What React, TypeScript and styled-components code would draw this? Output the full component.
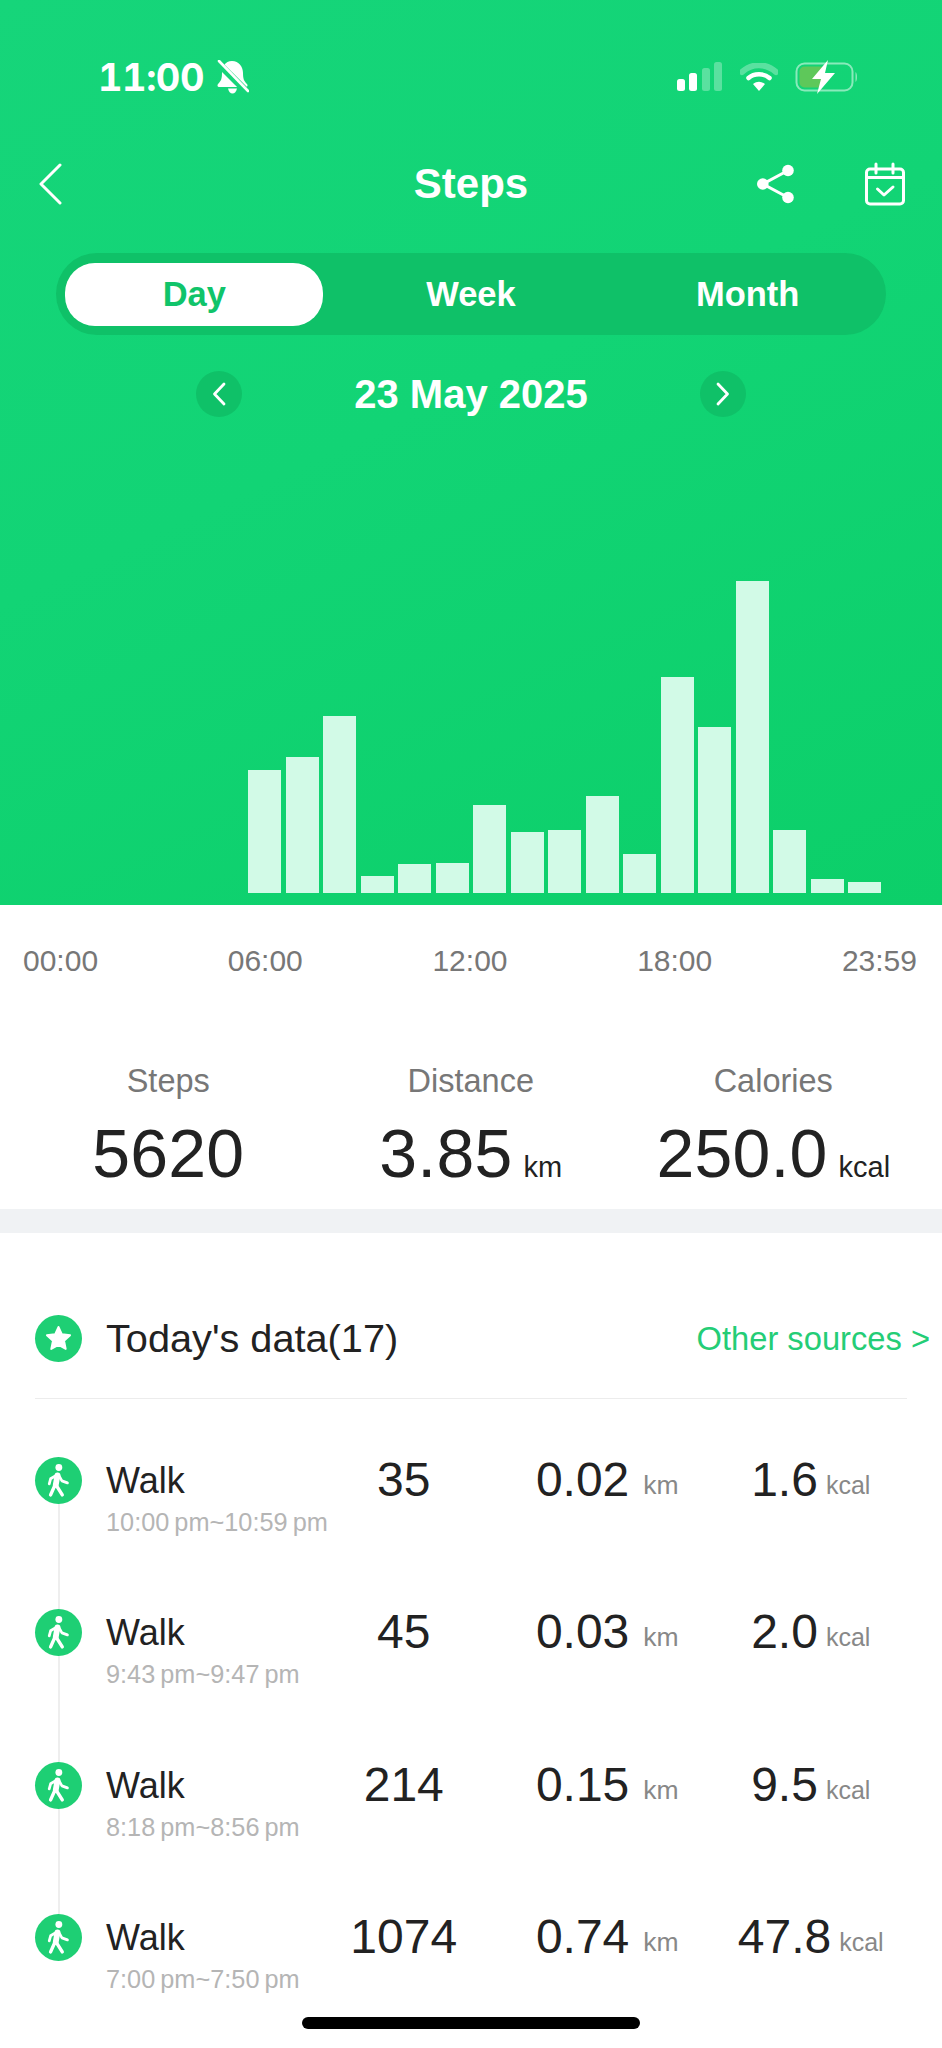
import React from "react";
import styled, { createGlobalStyle } from "styled-components";

const GlobalStyle = createGlobalStyle`
  html, body {
    margin: 0;
    padding: 0;
    background: #ffffff;
  }
  * {
    box-sizing: border-box;
  }
`;

const BAR_HEIGHTS = [123, 136, 177, 17, 29, 30, 88, 61, 63, 97, 39, 216, 166, 312, 63, 14, 11];
const AXIS_LABELS = ["00:00", "06:00", "12:00", "18:00", "23:59"];

const WALKS = [
  { time: "10:00\u2009pm~10:59\u2009pm", steps: "35", km: "0.02", kcal: "1.6" },
  { time: "9:43\u2009pm~9:47\u2009pm", steps: "45", km: "0.03", kcal: "2.0" },
  { time: "8:18\u2009pm~8:56\u2009pm", steps: "214", km: "0.15", kcal: "9.5" },
  { time: "7:00\u2009pm~7:50\u2009pm", steps: "1074", km: "0.74", kcal: "47.8" },
];

const WalkIcon = () => (
  <svg width="25" height="35" viewBox="55 38 72 102" fill="none">
    <circle cx="92" cy="51" r="10" fill="#fff" />
    <path d="M88 72 L68 84 L64 99" stroke="#fff" strokeWidth="8" strokeLinecap="round" strokeLinejoin="round" />
    <path d="M92 74 L101 90 L117 96" stroke="#fff" strokeWidth="8" strokeLinecap="round" strokeLinejoin="round" />
    <path d="M88 74 L83 102" stroke="#fff" strokeWidth="17" strokeLinecap="round" />
    <path d="M80 104 L68 131" stroke="#fff" strokeWidth="10" strokeLinecap="round" />
    <path d="M85 104 L102 131" stroke="#fff" strokeWidth="10" strokeLinecap="round" />
  </svg>
);

const App = () => {
  return (
    <Page>
      <GlobalStyle />
      <Hero>
        <StatusBar>
          <StatusLeft>
            <Clock>11:00</Clock>
            <svg width="33" height="34" viewBox="0 0 33 34" fill="none">
              <path
                d="M16 1 C23 1 27 7 27 13 C27 19 28 21 31 24 C32 25.500 31.500 27 30 27 H3 C1.500 27 1 25.500 2 24 C5 21 6 19 6 13 C6 7 9 1 16 1Z"
                fill="#fff"
              />
              <path d="M12 28.500 H21 C20.500 31.500 18.500 33.500 16.500 33.500 C14.500 33.500 12.500 31.500 12 28.500Z" fill="#fff" />
              <path d="M1 2 L32 33" stroke="#16d57a" strokeWidth="7" />
              <path d="M3 1 L32 31" stroke="#fff" strokeWidth="2.6" strokeLinecap="round" />
            </svg>
          </StatusLeft>
          <StatusRight>
            <svg width="46" height="30" viewBox="0 0 46 30">
              <rect x="0" y="17" width="8" height="12" rx="2.5" fill="#fff" />
              <rect x="12" y="11" width="8" height="18" rx="2.5" fill="#fff" />
              <rect x="25" y="6" width="8" height="23" rx="2.5" fill="#fff" opacity="0.3" />
              <rect x="37" y="0" width="8" height="29" rx="2.5" fill="#fff" opacity="0.3" />
            </svg>
            <svg width="38" height="28" viewBox="0 0 38 28" fill="none">
              <path d="M2 9 C12 0 26 0 36 9" stroke="#fff" strokeOpacity="0.3" strokeWidth="6" strokeLinecap="round" />
              <path d="M8.500 15 C14 10 24 10 29.500 15" stroke="#fff" strokeWidth="4.5" strokeLinecap="round" />
              <path d="M13 21 C17 18 21 18 25 21 L19 28Z" fill="#fff" />
            </svg>
            <svg width="64" height="34" viewBox="0 0 64 34" fill="none">
              <rect x="1.500" y="3.500" width="56" height="27" rx="8" stroke="#fff" strokeOpacity="0.5" strokeWidth="2" />
              <rect x="4.500" y="6.500" width="25" height="21" rx="5" fill="#5ec85a" />
              <path d="M60.500 12 C62.500 13 62.500 21 60.500 22Z" fill="#fff" fillOpacity="0.5" />
              <path d="M33 0 L17 19 H26 L22 34 L40 13 H30Z" fill="#fff" />
            </svg>
          </StatusRight>
        </StatusBar>

        <NavBar>
          <svg width="24" height="42" viewBox="0 0 24 42" fill="none">
            <path d="M22 2 L3 21 L22 40" stroke="#fff" strokeWidth="3" strokeLinecap="round" strokeLinejoin="round" />
          </svg>
          <NavTitle>Steps</NavTitle>
          <NavActions>
            <svg width="40" height="42" viewBox="0 0 40 42" fill="none">
              <path d="M32 7.500 L7 21 L32 34.500" stroke="#fff" strokeWidth="3" />
              <circle cx="32" cy="7.500" r="5.8" fill="#fff" />
              <circle cx="6.800" cy="21" r="5.8" fill="#fff" />
              <circle cx="32" cy="34.500" r="5.8" fill="#fff" />
            </svg>
            <svg width="42" height="44" viewBox="0 0 42 44" fill="none">
              <rect x="2.500" y="7" width="37" height="35" rx="3.5" stroke="#fff" strokeWidth="3" />
              <path d="M2.500 15.500 H39.500" stroke="#fff" strokeWidth="3" />
              <path d="M12 2 V11 M29 2 V11" stroke="#fff" strokeWidth="3" strokeLinecap="round" />
              <path d="M13.500 27 L20 33 L29 25" stroke="#fff" strokeWidth="3" strokeLinecap="round" strokeLinejoin="round" />
            </svg>
          </NavActions>
        </NavBar>

        <Tabs>
          <Tab $active>Day</Tab>
          <Tab>Week</Tab>
          <Tab>Month</Tab>
        </Tabs>

        <DateRow>
          <DateArrow>
            <svg width="14" height="24" viewBox="0 0 14 24" fill="none">
              <path d="M12 2 L2.500 12 L12 22" stroke="#fff" strokeWidth="2.8" strokeLinecap="round" strokeLinejoin="round" />
            </svg>
          </DateArrow>
          <DateText>23 May 2025</DateText>
          <DateArrow>
            <svg width="14" height="24" viewBox="0 0 14 24" fill="none">
              <path d="M2 2 L11.500 12 L2 22" stroke="#fff" strokeWidth="2.8" strokeLinecap="round" strokeLinejoin="round" />
            </svg>
          </DateArrow>
        </DateRow>

        <Chart>
          {BAR_HEIGHTS.map((h, i) => (
            <Bar key={i} $h={h} />
          ))}
        </Chart>
      </Hero>

      <Axis>
        {AXIS_LABELS.map((label) => (
          <AxisLabel key={label}>{label}</AxisLabel>
        ))}
      </Axis>

      <Stats>
        <Stat>
          <StatLabel>Steps</StatLabel>
          <StatValue>5620</StatValue>
        </Stat>
        <Stat>
          <StatLabel>Distance</StatLabel>
          <StatValue>
            3.85<StatUnit>km</StatUnit>
          </StatValue>
        </Stat>
        <Stat>
          <StatLabel>Calories</StatLabel>
          <StatValue>
            250.0<StatUnit>kcal</StatUnit>
          </StatValue>
        </Stat>
      </Stats>

      <Band />

      <Section>
        <SectionHead>
          <HeadLeft>
            <GreenDot>
              <svg width="27" height="26" viewBox="0 0 29 28">
                <path
                  d="M14.500 2 L18.200 10 L27 11 L20.500 17 L22.300 25.800 L14.500 21.400 L6.700 25.800 L8.500 17 L2 11 L10.800 10Z"
                  fill="#fff"
                  stroke="#fff"
                  strokeWidth="2"
                  strokeLinejoin="round"
                />
              </svg>
            </GreenDot>
            <HeadTitle>Today's data(17)</HeadTitle>
          </HeadLeft>
          <HeadLink>Other sources &gt;</HeadLink>
        </SectionHead>

        <List>
          {WALKS.map((walk, i) => (
            <Row key={walk.time}>
              <Marker>
                <GreenDot>
                  <WalkIcon />
                </GreenDot>
                {i < WALKS.length - 1 && <Connector />}
              </Marker>
              <RowInfo>
                <RowName>Walk</RowName>
                <RowTime>{walk.time}</RowTime>
              </RowInfo>
              <RowValue>{walk.steps}</RowValue>
              <RowValue>
                {walk.km}
                <RowUnit $gap={14} $size={26.5}>km</RowUnit>
              </RowValue>
              <RowValue>
                {walk.kcal}
                <RowUnit $gap={8} $size={25}>kcal</RowUnit>
              </RowValue>
            </Row>
          ))}
        </List>
      </Section>

      <HomeIndicator />
    </Page>
  );
};

export default App;

const Page = styled.div`
  position: relative;
  width: 942px;
  height: 2048px;
  overflow: hidden;
  background: #ffffff;
  font-family: "Liberation Sans", Arial, sans-serif;
`;

const Hero = styled.div`
  height: 905px;
  display: flex;
  flex-direction: column;
  padding-top: 60px;
  background: linear-gradient(155deg, #16d57a 0%, #12d475 45%, #0ccf69 100%);
`;

const StatusBar = styled.div`
  height: 34px;
  display: flex;
  justify-content: space-between;
  align-items: center;
  padding: 0 83px 0 98px;
`;

const StatusLeft = styled.div`
  display: flex;
  align-items: center;
  gap: 12px;
`;

const Clock = styled.span`
  font-family: Inter, "Liberation Sans", sans-serif;
  font-size: 38px;
  font-weight: 700;
  line-height: 34px;
  font-variant-numeric: tabular-nums;
  letter-spacing: -0.5px;
  color: #ffffff;
`;

const StatusRight = styled.div`
  display: flex;
  align-items: center;
  gap: 17px;
`;

const NavBar = styled.div`
  height: 44px;
  margin-top: 68px;
  display: flex;
  justify-content: space-between;
  align-items: center;
  position: relative;
  padding: 0 36px 0 38px;
`;

const NavTitle = styled.div`
  position: absolute;
  left: 0;
  right: 0;
  text-align: center;
  font-size: 42px;
  font-weight: 700;
  line-height: 44px;
  color: #ffffff;
`;

const NavActions = styled.div`
  display: flex;
  align-items: center;
  gap: 68px;
`;

const Tabs = styled.div`
  width: 830px;
  height: 82px;
  margin: 47px 0 0 56px;
  display: grid;
  grid-template-columns: repeat(3, 1fr);
  align-items: center;
  justify-items: center;
  border-radius: 41px;
  background: #0fc168;
`;

const Tab = styled.div<{ $active?: boolean }>`
  width: 258px;
  height: 63px;
  display: flex;
  align-items: center;
  justify-content: center;
  border-radius: 30px;
  font-size: 34.5px;
  font-weight: 700;
  background: ${(p) => (p.$active ? "#ffffff" : "transparent")};
  color: ${(p) => (p.$active ? "#10c46a" : "#ffffff")};
`;

const DateRow = styled.div`
  height: 46px;
  margin-top: 36px;
  display: flex;
  justify-content: center;
  align-items: center;
  gap: 112px;
`;

const DateArrow = styled.div`
  width: 46px;
  height: 46px;
  display: flex;
  align-items: center;
  justify-content: center;
  border-radius: 50%;
  background: #0fc168;
`;

const DateText = styled.div`
  width: 234px;
  white-space: nowrap;
  text-align: center;
  font-size: 40px;
  font-weight: 700;
  color: #ffffff;
`;

const Chart = styled.div`
  flex: 1;
  display: flex;
  align-items: flex-end;
  gap: 4.5px;
  padding: 0 0 12px 248px;
`;

const Bar = styled.div<{ $h: number }>`
  width: 33px;
  height: ${(p) => p.$h}px;
  background: #d2fae7;
`;

const Axis = styled.div`
  display: flex;
  justify-content: space-between;
  padding: 38px 25px 0 23px;
`;

const AxisLabel = styled.span`
  font-size: 30px;
  line-height: 36px;
  color: #777777;
`;

const Stats = styled.div`
  display: grid;
  grid-template-columns: repeat(3, 302.5px);
  padding: 82px 0 0 17px;
  height: 230px;
`;

const Stat = styled.div`
  display: flex;
  flex-direction: column;
  align-items: center;
`;

const StatLabel = styled.div`
  font-size: 32.5px;
  line-height: 40px;
  color: #777777;
`;

const StatValue = styled.div`
  margin-top: 17px;
  font-size: 68px;
  line-height: 70px;
  letter-spacing: 0.2px;
  white-space: nowrap;
  color: #222222;
`;

const StatUnit = styled.span`
  margin-left: 11px;
  font-size: 29px;
  letter-spacing: 0;
  color: #222222;
`;

const Band = styled.div`
  height: 24px;
  background: #f0f2f4;
`;

const Section = styled.div`
  padding: 81px 0 0 35px;
`;

const SectionHead = styled.div`
  width: 872px;
  display: flex;
  justify-content: space-between;
  align-items: center;
  padding-bottom: 36px;
  border-bottom: 1px solid #ececec;
`;

const HeadLeft = styled.div`
  display: flex;
  align-items: center;
  gap: 24px;
`;

const GreenDot = styled.div`
  width: 47px;
  height: 47px;
  flex: none;
  display: flex;
  align-items: center;
  justify-content: center;
  border-radius: 50%;
  background: #1ecf74;
`;

const HeadTitle = styled.div`
  padding-top: 1px;
  font-size: 39.7px;
  line-height: 47px;
  color: #222222;
`;

const HeadLink = styled.div`
  margin-right: -23px;
  padding-top: 1px;
  font-size: 32.7px;
  color: #24cd76;
  white-space: nowrap;
`;

const List = styled.div`
  margin-top: 58px;
`;

const Row = styled.div`
  height: 152.3px;
  display: grid;
  grid-template-columns: 47px 220px repeat(3, 203.5px);
  align-items: start;
`;

const Marker = styled.div`
  height: 100%;
  display: flex;
  flex-direction: column;
  align-items: center;
`;

const Connector = styled.div`
  flex: 1;
  width: 2px;
  background: #eeeeee;
`;

const RowInfo = styled.div`
  padding-left: 24px;
`;

const RowName = styled.div`
  font-size: 36px;
  line-height: 47px;
  color: #222222;
`;

const RowTime = styled.div`
  margin-top: 2px;
  font-size: 25.3px;
  line-height: 32px;
  white-space: nowrap;
  color: #b5b5b5;
`;

const RowValue = styled.div`
  text-align: center;
  font-size: 48px;
  line-height: 46px;
  white-space: nowrap;
  color: #222222;
`;

const RowUnit = styled.span<{ $gap: number; $size: number }>`
  margin-left: ${(p) => p.$gap}px;
  font-size: ${(p) => p.$size}px;
  vertical-align: 2px;
  color: #888888;
`;

const HomeIndicator = styled.div`
  position: absolute;
  left: 302px;
  top: 2017px;
  width: 338px;
  height: 12px;
  border-radius: 6px;
  background: #000000;
`;
